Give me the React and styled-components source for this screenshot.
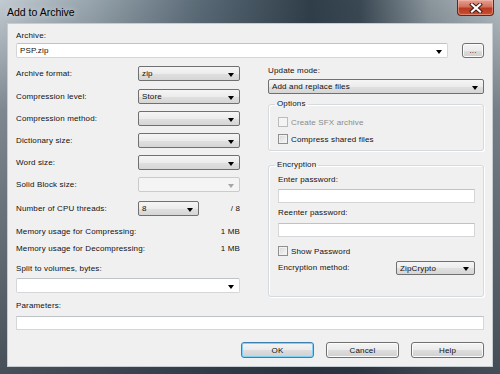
import React from 'react';
import styled, { createGlobalStyle, css } from "styled-components"

const GlobalStyle = createGlobalStyle`
  html, body {
    margin: 0;
    padding: 0;
    background: #ffffff;
  }
  body {
    font-family: "Liberation Sans", Arial, sans-serif;
  }
`

const App = () => {
  return (
    <>
      <GlobalStyle />
      <StyledWindow>
        <StyledTitleBar>
          <StyledTitle>Add to Archive</StyledTitle>
          <StyledClose>
            <svg width="14" height="10" viewBox="0 0 14 10">
              <path d="M3 1.5 L11 8.5 M11 1.5 L3 8.5" stroke="#3a1410" strokeWidth="4" strokeLinecap="square" />
              <path d="M3 1.5 L11 8.5 M11 1.5 L3 8.5" stroke="#ffffff" strokeWidth="2.2" strokeLinecap="square" />
            </svg>
          </StyledClose>
        </StyledTitleBar>

        <StyledClient>
          <StyledLabel>Archive:</StyledLabel>
          <StyledArchiveRow>
            <StyledCombo variant="edit" width="432px" height="15px">
              PSP.zip
              <StyledArrow />
            </StyledCombo>
            <StyledButton width="22px" height="15px">...</StyledButton>
          </StyledArchiveRow>

          <StyledColumns>
            <StyledLeft>
              <StyledRow>
                <StyledLabel>Archive format:</StyledLabel>
                <StyledCombo variant="list">zip<StyledArrow /></StyledCombo>
              </StyledRow>
              <StyledRow gap="8px">
                <StyledLabel>Compression level:</StyledLabel>
                <StyledCombo variant="list">Store<StyledArrow /></StyledCombo>
              </StyledRow>
              <StyledRow gap="7px">
                <StyledLabel>Compression method:</StyledLabel>
                <StyledCombo variant="list"><StyledArrow /></StyledCombo>
              </StyledRow>
              <StyledRow gap="7px">
                <StyledLabel>Dictionary size:</StyledLabel>
                <StyledCombo variant="list"><StyledArrow /></StyledCombo>
              </StyledRow>
              <StyledRow gap="7px">
                <StyledLabel>Word size:</StyledLabel>
                <StyledCombo variant="list"><StyledArrow /></StyledCombo>
              </StyledRow>
              <StyledRow gap="7px">
                <StyledLabel>Solid Block size:</StyledLabel>
                <StyledCombo variant="disabled"><StyledArrow disabled /></StyledCombo>
              </StyledRow>
              <StyledRow gap="9px">
                <StyledLabel>Number of CPU threads:</StyledLabel>
                <StyledThreads>
                  <StyledCombo variant="list" width="61px">8<StyledArrow /></StyledCombo>
                  <StyledLabel>/ 8</StyledLabel>
                </StyledThreads>
              </StyledRow>
              <StyledInfoRow gap="11px">
                <StyledLabel>Memory usage for Compressing:</StyledLabel>
                <StyledLabel>1 MB</StyledLabel>
              </StyledInfoRow>
              <StyledInfoRow gap="7px">
                <StyledLabel>Memory usage for Decompressing:</StyledLabel>
                <StyledLabel>1 MB</StyledLabel>
              </StyledInfoRow>
              <StyledLabel gap="10px">Split to volumes, bytes:</StyledLabel>
              <StyledCombo variant="edit" width="100%" gap="4px">
                <StyledArrow />
              </StyledCombo>
            </StyledLeft>

            <StyledRight>
              <StyledLabel>Update mode:</StyledLabel>
              <StyledCombo variant="list" width="100%" gap="3px">
                Add and replace files
                <StyledArrow />
              </StyledCombo>

              <StyledGroup gap="5px">
                <StyledLegend>Options</StyledLegend>
                <StyledCheckRow disabled>
                  <StyledCheck disabled />
                  Create SFX archive
                </StyledCheckRow>
                <StyledCheckRow gap="7px">
                  <StyledCheck />
                  Compress shared files
                </StyledCheckRow>
              </StyledGroup>

              <StyledGroup gap="9px" pad="5px 8px 21px 9px">
                <StyledLegend>Encryption</StyledLegend>
                <StyledLabel>Enter password:</StyledLabel>
                <StyledInput gap="4px" />
                <StyledLabel gap="5px">Reenter password:</StyledLabel>
                <StyledInput gap="5px" />
                <StyledCheckRow gap="9px">
                  <StyledCheck />
                  Show Password
                </StyledCheckRow>
                <StyledMethodRow>
                  <StyledLabel>Encryption method:</StyledLabel>
                  <StyledCombo variant="list" width="79px" height="14px">
                    ZipCrypto
                    <StyledArrow />
                  </StyledCombo>
                </StyledMethodRow>
              </StyledGroup>
            </StyledRight>
          </StyledColumns>

          <StyledLabel gap="4px">Parameters:</StyledLabel>
          <StyledInput gap="5px" />

          <StyledButtons>
            <StyledButton isDefault>OK</StyledButton>
            <StyledButton>Cancel</StyledButton>
            <StyledButton>Help</StyledButton>
          </StyledButtons>
        </StyledClient>
      </StyledWindow>
    </>
  )
}

const StyledWindow = styled.div`
  width: 500px;
  height: 374px;
  display: flex;
  flex-direction: column;
  box-sizing: border-box;
  background:
    linear-gradient(to bottom, rgba(45, 55, 66, 0) 0px, rgba(45, 55, 66, 0.45) 110px, rgba(40, 48, 58, 0.8) 100%),
    linear-gradient(to right, #c2cbd1 0%, #98a5ae 18%, #5a6a76 40%, #2f3e49 62%, #3a4853 72%, #8a959c 86%, #b4bcc1 100%);
`

const StyledTitleBar = styled.div`
  height: 23px;
  display: flex;
  align-items: flex-start;
  justify-content: space-between;
  padding-left: 7px;
  padding-right: 6px;
  box-sizing: border-box;
`

const StyledTitle = styled.div`
  font-size: 10.5px;
  line-height: 12px;
  margin-top: 6px;
  color: #000000;
  text-shadow: 0 0 6px rgba(255, 255, 255, 0.7);
`

const StyledClose = styled.div`
  width: 37px;
  height: 16px;
  box-sizing: border-box;
  display: flex;
  align-items: center;
  justify-content: center;
  border: 1px solid #5b2a22;
  border-top: none;
  border-radius: 0 0 4px 4px;
  background: linear-gradient(to bottom, #e5a293 0%, #d2705c 45%, #b83a22 55%, #c9512f 100%);
  box-shadow: inset 0 0 0 1px rgba(255, 200, 190, 0.45);
`

const StyledClient = styled.div`
  flex: 1;
  margin: 0 7px 7px 7px;
  background: #f0f0f0;
  border: 1px solid #c5ccd2;
  padding: 7px 8px 0 8px;
  display: flex;
  flex-direction: column;
  font-size: 8px;
  color: #111111;
`

const StyledLabel = styled.div`
  font-size: 8px;
  line-height: 10px;
  height: 10px;
  white-space: nowrap;
  letter-spacing: 0.15px;
  margin-top: ${p => p.gap || "0"};
`

const StyledArchiveRow = styled.div`
  display: flex;
  justify-content: space-between;
  margin-top: 2px;
`

const comboVariants = {
  list: css`
    border: 1px solid #707070;
    background: linear-gradient(to bottom, #f5f5f5 0%, #ececec 50%, #e0e0e0 51%, #d6d6d6 100%);
  `,
  edit: css`
    border: 1px solid #d4d6d9;
    border-top-color: #c0c3c6;
    background: #ffffff;
  `,
  disabled: css`
    border: 1px solid #c9cbcd;
    background: #f4f4f4;
  `,
}

const StyledCombo = styled.div`
  position: relative;
  box-sizing: border-box;
  width: ${p => p.width || "102px"};
  height: ${p => p.height || "15px"};
  margin-top: ${p => p.gap || "0"};
  border-radius: 2px;
  padding: 0 14px 0 3px;
  display: flex;
  align-items: center;
  font-size: 8px;
  letter-spacing: 0.15px;
  white-space: nowrap;
  ${p => comboVariants[p.variant]}
`

const StyledArrow = styled.span`
  position: absolute;
  right: 5px;
  top: 50%;
  margin-top: -1px;
  width: 0;
  height: 0;
  border-left: 3.5px solid transparent;
  border-right: 3.5px solid transparent;
  border-top: 4px solid ${p => (p.disabled ? "#a6a6a6" : "#000000")};
`

const StyledColumns = styled.div`
  display: flex;
  gap: 28px;
  margin-top: 8px;
`

const StyledLeft = styled.div`
  width: 224px;
  display: flex;
  flex-direction: column;
`

const StyledRight = styled.div`
  flex: 1;
  display: flex;
  flex-direction: column;
`

const StyledRow = styled.div`
  display: flex;
  align-items: center;
  justify-content: space-between;
  height: 15px;
  margin-top: ${p => p.gap || "0"};
`

const StyledThreads = styled.div`
  width: 102px;
  display: flex;
  align-items: center;
  justify-content: space-between;
`

const StyledInfoRow = styled.div`
  display: flex;
  justify-content: space-between;
  margin-top: ${p => p.gap || "0"};
`

const StyledGroup = styled.fieldset`
  margin: ${p => p.gap || "0"} 0 0 0;
  padding: ${p => p.pad || "8px 8px 6px 9px"};
  border: 1px solid #d5dadf;
  border-radius: 3px;
  display: flex;
  flex-direction: column;
  min-width: 0;
  box-shadow: inset 1px 1px 0 #ffffff, 1px 1px 0 #ffffff;
`

const StyledLegend = styled.legend`
  font-size: 8px;
  line-height: 10px;
  letter-spacing: 0.15px;
  padding: 0 2px;
  margin-left: -3px;
`

const StyledCheckRow = styled.div`
  display: flex;
  align-items: center;
  gap: 3px;
  height: 10px;
  font-size: 8px;
  letter-spacing: 0.15px;
  margin-top: ${p => p.gap || "0"};
  color: ${p => (p.disabled ? "#8a8a8a" : "#111111")};
`

const StyledCheck = styled.span`
  width: 10px;
  height: 10px;
  box-sizing: border-box;
  border: 1px solid ${p => (p.disabled ? "#bcbcbc" : "#8e8f8f")};
  background: ${p =>
    p.disabled
      ? "#f4f4f4"
      : "linear-gradient(135deg, #d6d6d6 0%, #ececec 60%, #f8f8f8 100%)"};
  box-shadow: inset 0 0 0 1px ${p => (p.disabled ? "#f4f4f4" : "#f2f2f2")};
`

const StyledInput = styled.div`
  height: 14px;
  box-sizing: border-box;
  margin-top: ${p => p.gap || "0"};
  border: 1px solid #d4d6d9;
  border-top-color: #c0c3c6;
  background: #ffffff;
`

const StyledMethodRow = styled.div`
  display: flex;
  align-items: center;
  justify-content: space-between;
  margin-top: 5px;
`

const StyledButtons = styled.div`
  display: flex;
  justify-content: flex-end;
  gap: 12px;
  margin-top: 12px;
`

const StyledButton = styled.div`
  width: ${p => p.width || "73px"};
  height: ${p => p.height || "16px"};
  box-sizing: border-box;
  display: flex;
  align-items: center;
  justify-content: center;
  font-size: 8px;
  letter-spacing: 0.15px;
  border-radius: 3px;
  border: 1px solid ${p => (p.isDefault ? "#3c7fb1" : "#707070")};
  background: linear-gradient(to bottom, #f4f4f4 0%, #ebebeb 50%, #dddddd 51%, #d0d0d0 100%);
  box-shadow: inset 0 0 0 1px ${p => (p.isDefault ? "#7fd2f6" : "#fbfbfb")};
`

export default App
